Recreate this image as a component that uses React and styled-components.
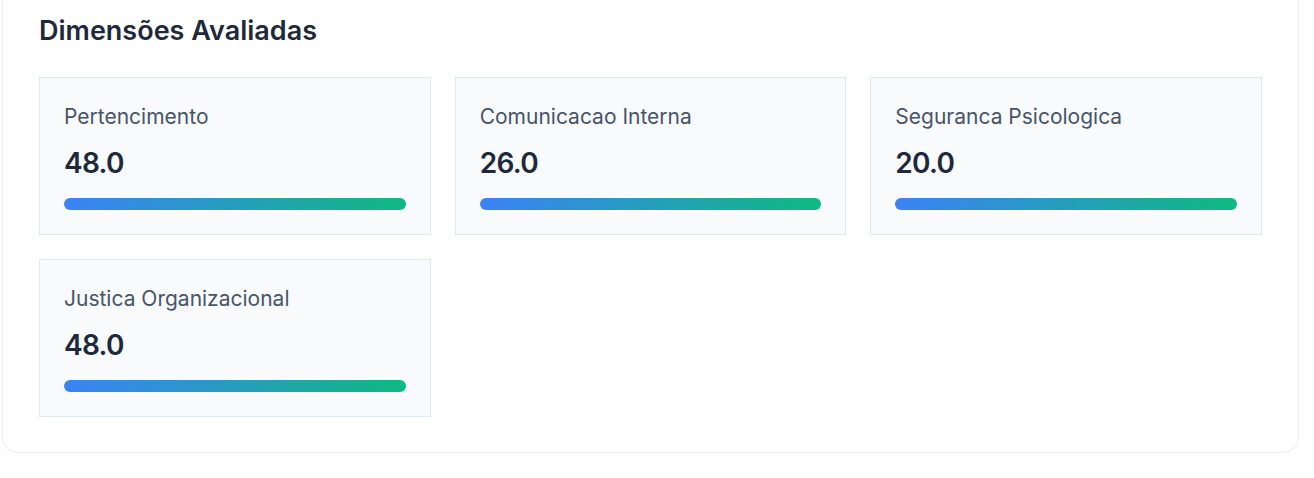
import React from "react";
import styled, { createGlobalStyle } from "styled-components";

const GlobalStyle = createGlobalStyle`
  html, body {
    margin: 0;
    padding: 0;
    background: #ffffff;
    font-family: Inter, "Noto Sans", sans-serif;
  }
`;

const Page = styled.div`
  padding: 0 15px 0 2px;
`;

const Panel = styled.section`
  background: #ffffff;
  border: 1px solid #eceef3;
  border-top: none;
  border-radius: 0 0 16px 16px;
  padding: 15px 36px 35px 36px;
`;

const Title = styled.h2`
  margin: 0 0 30px 0;
  font-size: 27px;
  line-height: 32px;
  font-weight: 600;
  color: #1e293b;
`;

const Grid = styled.div`
  display: grid;
  grid-template-columns: repeat(3, 1fr);
  gap: 24px;
`;

const Card = styled.div`
  background: #f8fafc;
  border: 1px solid #e2e8f0;
  padding: 24px;
`;

const Label = styled.div`
  font-size: 21px;
  line-height: 30px;
  color: #475569;
  margin-bottom: 14px;
`;

const Value = styled.div`
  font-size: 28px;
  line-height: 34px;
  font-weight: 600;
  letter-spacing: -0.025em;
  color: #1e293b;
  margin-bottom: 18px;
`;

const Bar = styled.div`
  height: 12px;
  border-radius: 6px;
  background: linear-gradient(90deg, #3b82f6, #10b981);
`;

const dimensions = [
  { name: "Pertencimento", score: "48.0" },
  { name: "Comunicacao Interna", score: "26.0" },
  { name: "Seguranca Psicologica", score: "20.0" },
  { name: "Justica Organizacional", score: "48.0" },
];

export default function App() {
  return (
    <Page>
      <GlobalStyle />
      <Panel>
        <Title>Dimensões Avaliadas</Title>
        <Grid>
          {dimensions.map((d) => (
            <Card key={d.name}>
              <Label>{d.name}</Label>
              <Value>{d.score}</Value>
              <Bar />
            </Card>
          ))}
        </Grid>
      </Panel>
    </Page>
  );
}
